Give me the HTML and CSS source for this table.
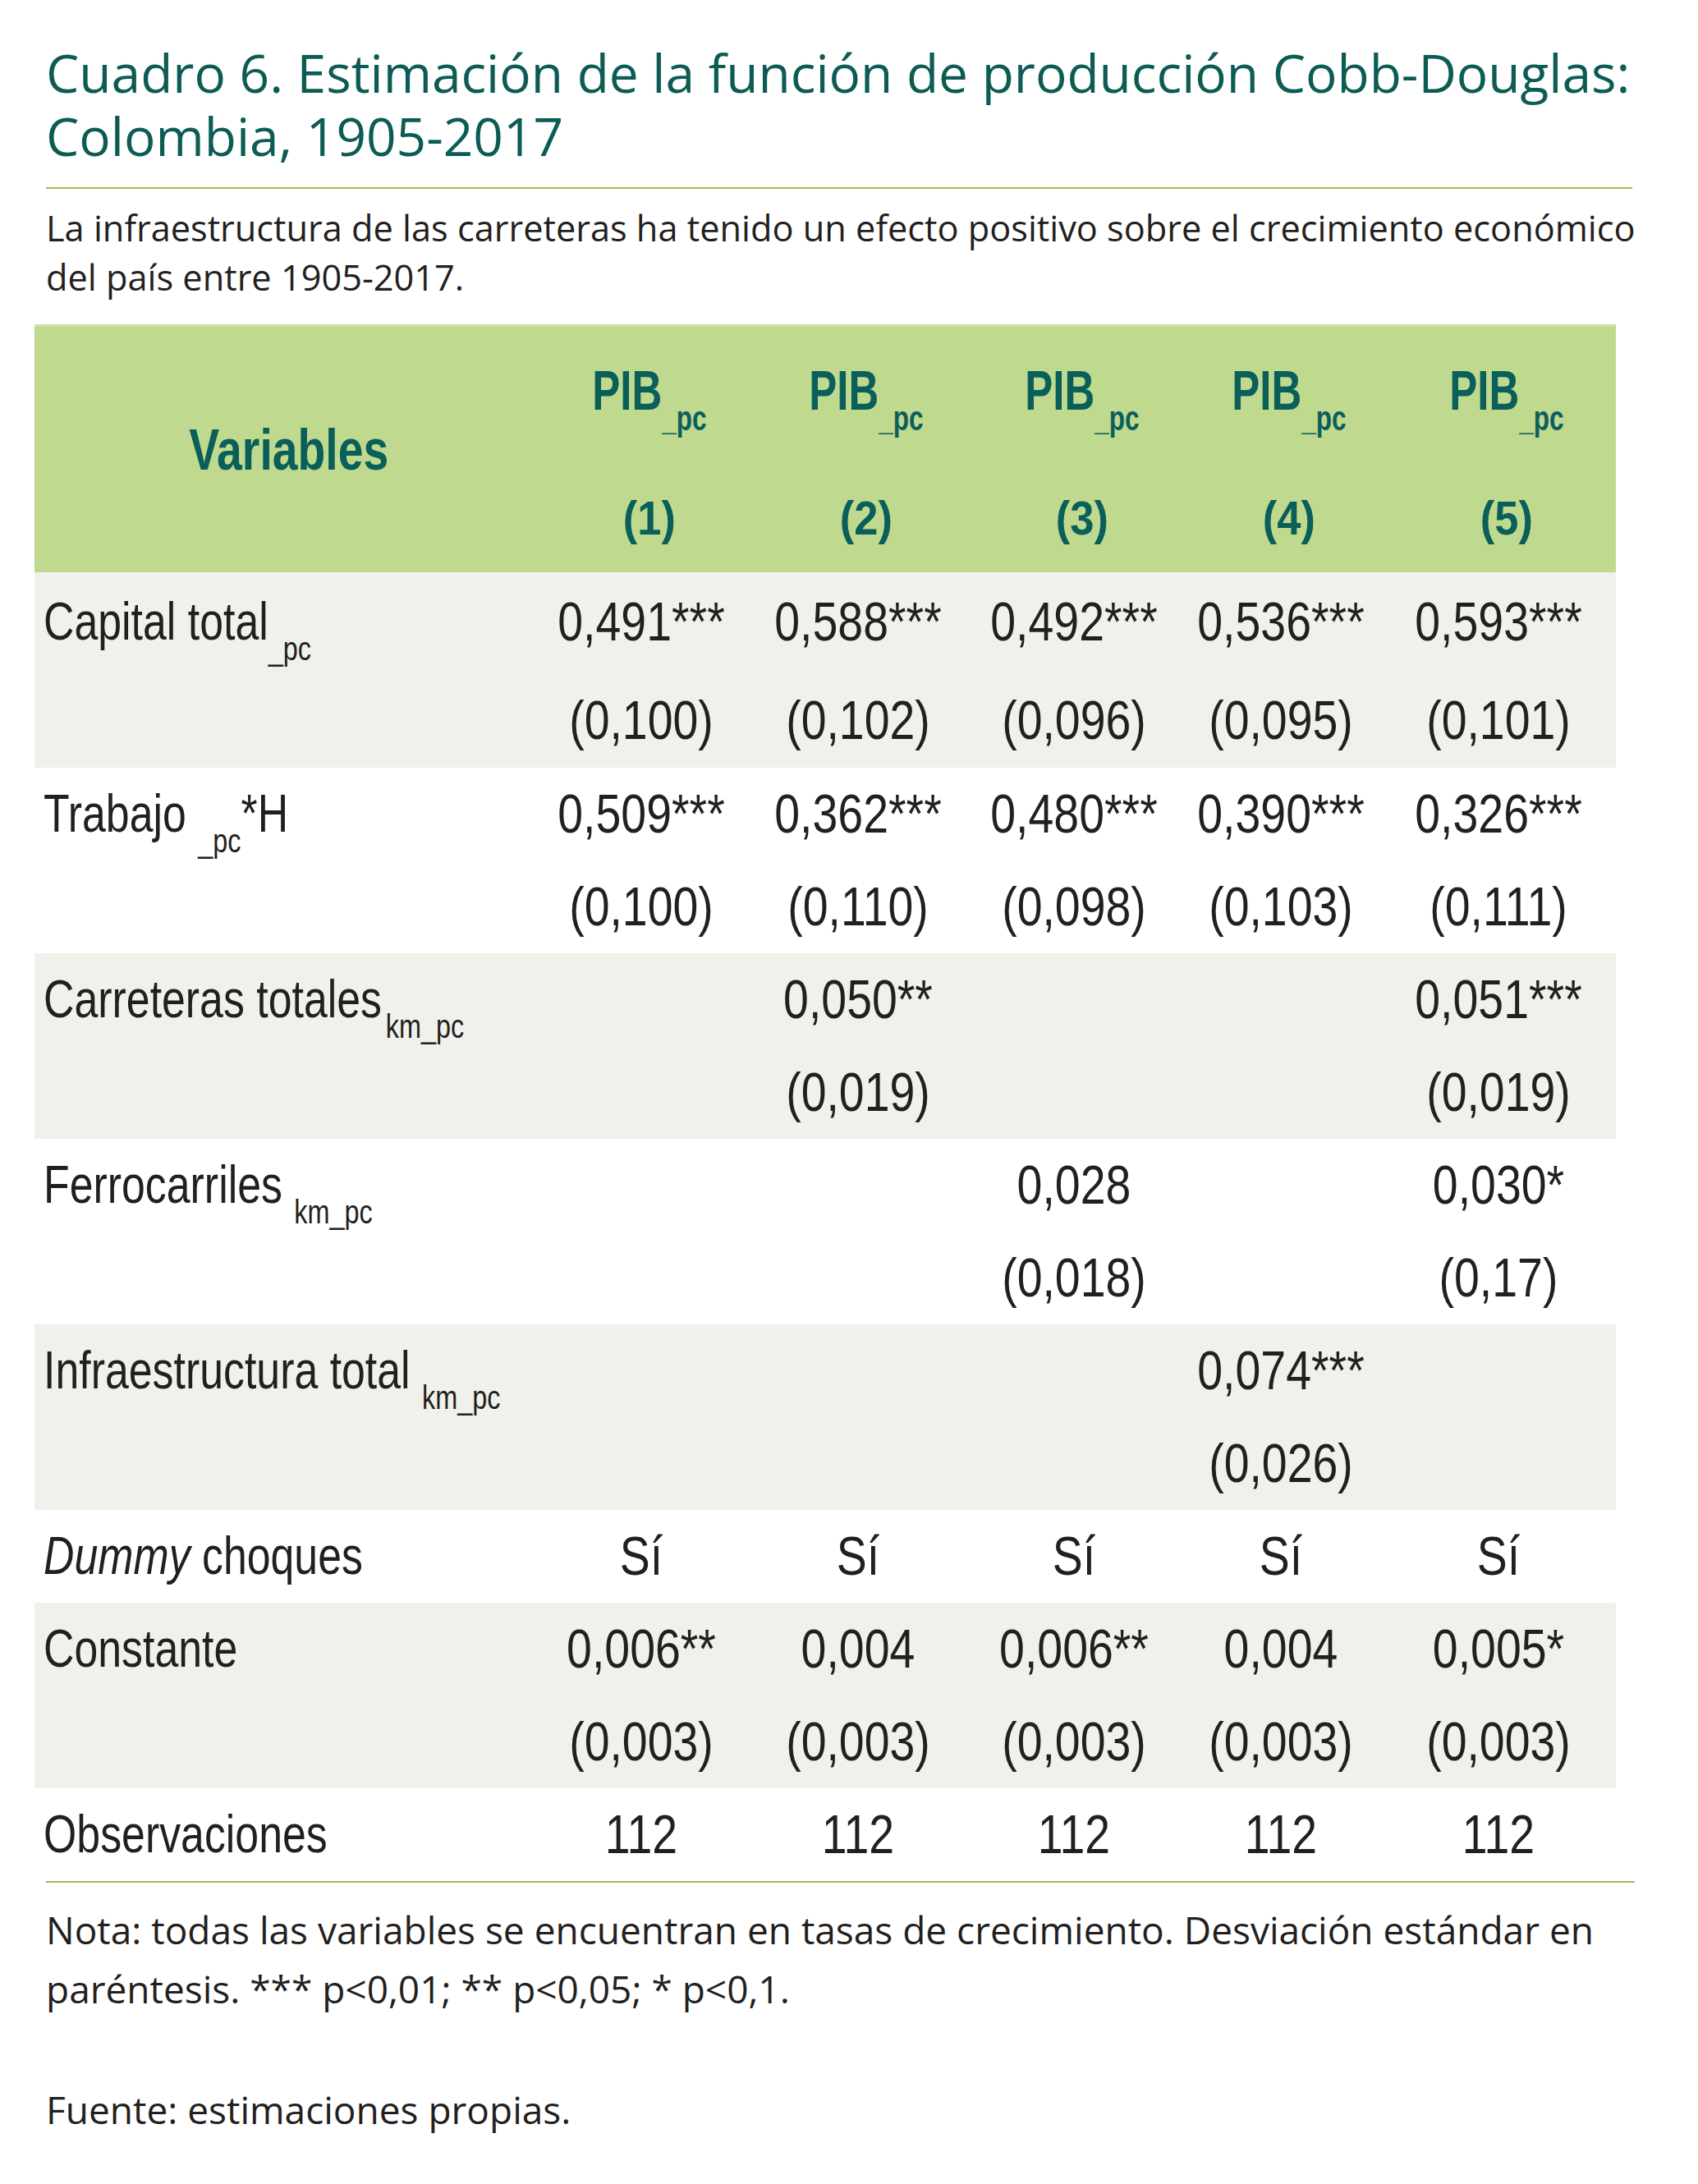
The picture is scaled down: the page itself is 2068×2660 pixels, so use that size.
FILE: index.html
```html
<!DOCTYPE html>
<html lang="es">
<head>
<meta charset="utf-8">
<title>Cuadro 6</title>
<link rel="stylesheet" href="styles.css">
</head>
<body>
<div class="page">
  <h1 class="title">Cuadro 6. Estimación de la función de producción Cobb-Douglas: Colombia, 1905-2017</h1>
  <hr class="rule">
  <p class="lead">La infraestructura de las carreteras ha tenido un efecto positivo sobre el crecimiento económico del país entre 1905-2017.</p>

  <div class="table">
    <div class="row head">
      <div class="cell label-h"><span class="vt">Variables</span></div>
      <div class="cell hc"><div class="h1">PIB<span class="hsub">_pc</span></div><div class="h2">(1)</div></div>
      <div class="cell hc"><div class="h1">PIB<span class="hsub">_pc</span></div><div class="h2">(2)</div></div>
      <div class="cell hc"><div class="h1">PIB<span class="hsub">_pc</span></div><div class="h2">(3)</div></div>
      <div class="cell hc"><div class="h1">PIB<span class="hsub">_pc</span></div><div class="h2">(4)</div></div>
      <div class="cell hc"><div class="h1">PIB<span class="hsub">_pc</span></div><div class="h2">(5)</div></div>
    </div>

    <div class="row shade first">
      <div class="cell lab"><div class="l">Capital total<span class="sub">_pc</span></div></div>
      <div class="cell num"><div class="l">0,491***</div><div class="l">(0,100)</div></div>
      <div class="cell num"><div class="l">0,588***</div><div class="l">(0,102)</div></div>
      <div class="cell num"><div class="l">0,492***</div><div class="l">(0,096)</div></div>
      <div class="cell num"><div class="l">0,536***</div><div class="l">(0,095)</div></div>
      <div class="cell num"><div class="l">0,593***</div><div class="l">(0,101)</div></div>
    </div>

    <div class="row">
      <div class="cell lab"><div class="l">Trabajo <span class="sub">_pc</span>*H</div></div>
      <div class="cell num"><div class="l">0,509***</div><div class="l">(0,100)</div></div>
      <div class="cell num"><div class="l">0,362***</div><div class="l">(0,110)</div></div>
      <div class="cell num"><div class="l">0,480***</div><div class="l">(0,098)</div></div>
      <div class="cell num"><div class="l">0,390***</div><div class="l">(0,103)</div></div>
      <div class="cell num"><div class="l">0,326***</div><div class="l">(0,111)</div></div>
    </div>

    <div class="row shade">
      <div class="cell lab"><div class="l">Carreteras totales<span class="sub sub-gap">km_pc</span></div></div>
      <div class="cell num"></div>
      <div class="cell num"><div class="l">0,050**</div><div class="l">(0,019)</div></div>
      <div class="cell num"></div>
      <div class="cell num"></div>
      <div class="cell num"><div class="l">0,051***</div><div class="l">(0,019)</div></div>
    </div>

    <div class="row">
      <div class="cell lab"><div class="l">Ferrocarriles <span class="sub">km_pc</span></div></div>
      <div class="cell num"></div>
      <div class="cell num"></div>
      <div class="cell num"><div class="l">0,028</div><div class="l">(0,018)</div></div>
      <div class="cell num"></div>
      <div class="cell num"><div class="l">0,030*</div><div class="l">(0,17)</div></div>
    </div>

    <div class="row shade">
      <div class="cell lab"><div class="l">Infraestructura total <span class="sub">km_pc</span></div></div>
      <div class="cell num"></div>
      <div class="cell num"></div>
      <div class="cell num"></div>
      <div class="cell num"><div class="l">0,074***</div><div class="l">(0,026)</div></div>
      <div class="cell num"></div>
    </div>

    <div class="row single">
      <div class="cell lab"><div class="l"><em>Dummy</em> choques</div></div>
      <div class="cell num"><div class="l">Sí</div></div>
      <div class="cell num"><div class="l">Sí</div></div>
      <div class="cell num"><div class="l">Sí</div></div>
      <div class="cell num"><div class="l">Sí</div></div>
      <div class="cell num"><div class="l">Sí</div></div>
    </div>

    <div class="row shade">
      <div class="cell lab"><div class="l">Constante</div></div>
      <div class="cell num"><div class="l">0,006**</div><div class="l">(0,003)</div></div>
      <div class="cell num"><div class="l">0,004</div><div class="l">(0,003)</div></div>
      <div class="cell num"><div class="l">0,006**</div><div class="l">(0,003)</div></div>
      <div class="cell num"><div class="l">0,004</div><div class="l">(0,003)</div></div>
      <div class="cell num"><div class="l">0,005*</div><div class="l">(0,003)</div></div>
    </div>

    <div class="row single">
      <div class="cell lab"><div class="l">Observaciones</div></div>
      <div class="cell num"><div class="l">112</div></div>
      <div class="cell num"><div class="l">112</div></div>
      <div class="cell num"><div class="l">112</div></div>
      <div class="cell num"><div class="l">112</div></div>
      <div class="cell num"><div class="l">112</div></div>
    </div>
  </div>

  <hr class="rule rule-bottom">
  <p class="note">Nota: todas las variables se encuentran en tasas de crecimiento. Desviación estándar en paréntesis. *** p&lt;0,01; ** p&lt;0,05; * p&lt;0,1.</p>
  <p class="note source">Fuente: estimaciones propias.</p>
</div>
</body>
</html>
```
FILE: styles.css
```css
html, body {
  margin: 0;
  padding: 0;
  background: #ffffff;
}

.page {
  width: 2068px;
  box-sizing: border-box;
  padding: 50px 0 0 56px;
  font-family: "Open Sans", "Noto Sans", sans-serif;
  color: #231f20;
}

.title {
  margin: 0;
  width: 1990px;
  font-size: 64px;
  font-weight: 400;
  line-height: 77px;
  color: #0c5c55;
}

.rule {
  margin: 24px 0 0 0;
  width: 1932px;
  height: 2px;
  border: 0;
  background: #a4bb4f;
}

.lead {
  margin: 18px 0 0 0;
  width: 1975px;
  font-size: 43.3px;
  line-height: 60px;
}

.table {
  margin: 27px 0 0 -14px;
  width: 1926px;
  font-family: "Liberation Sans", Arial, sans-serif;
  color: #231f20;
}

.row {
  display: grid;
  grid-template-columns: 608px 262px 266px 260px 244px 286px;
  height: 226px;
  background: #ffffff;
}

.row.shade {
  background: #f0f1ea;
}

.row.first {
  height: 238px;
}

.row.single {
  height: 113px;
}

.row.head {
  height: 302px;
  background: #bfd98e;
  border-top: 3px solid #cde2a8;
  box-sizing: border-box;
  color: #0a5f5a;
  font-weight: 700;
}

.cell {
  display: flex;
  flex-direction: column;
}

.label-h {
  justify-content: center;
  align-items: center;
  padding-left: 12px;
}

.vt {
  display: inline-block;
  font-size: 70px;
  transform: scaleX(0.79);
}

.hc {
  align-items: center;
  padding-top: 17px;
  padding-left: 20px;
}

.h1 {
  height: 120px;
  line-height: 120px;
  font-size: 68px;
  white-space: nowrap;
  transform: scaleX(0.75);
}

.h2 {
  margin-top: 36px;
  height: 120px;
  line-height: 120px;
  font-size: 57px;
  transform: scaleX(0.92);
}

.hsub {
  font-size: 42px;
  vertical-align: -25px;
  line-height: 0;
}

.l {
  height: 113px;
  line-height: 113px;
  white-space: nowrap;
}

.first .l {
  height: 119px;
  line-height: 119px;
  padding-top: 1px;
}

.lab {
  padding-left: 11px;
  font-size: 64px;
}

.lab .l {
  transform: scaleX(0.81);
  transform-origin: 0 50%;
}

.num {
  align-items: stretch;
  text-align: center;
  font-size: 66px;
}

.num .l {
  transform: scaleX(0.84);
  transform-origin: 50% 50%;
}

.sub {
  font-size: 40px;
  vertical-align: -25px;
  line-height: 0;
}

.sub-gap {
  margin-left: 6px;
}

em {
  font-style: italic;
}

.rule-bottom {
  margin-top: 0;
  width: 1935px;
}

.note {
  margin: 21px 0 0 0;
  width: 1965px;
  font-size: 46px;
  line-height: 72px;
}

.note.source {
  margin-top: 75px;
}
```
